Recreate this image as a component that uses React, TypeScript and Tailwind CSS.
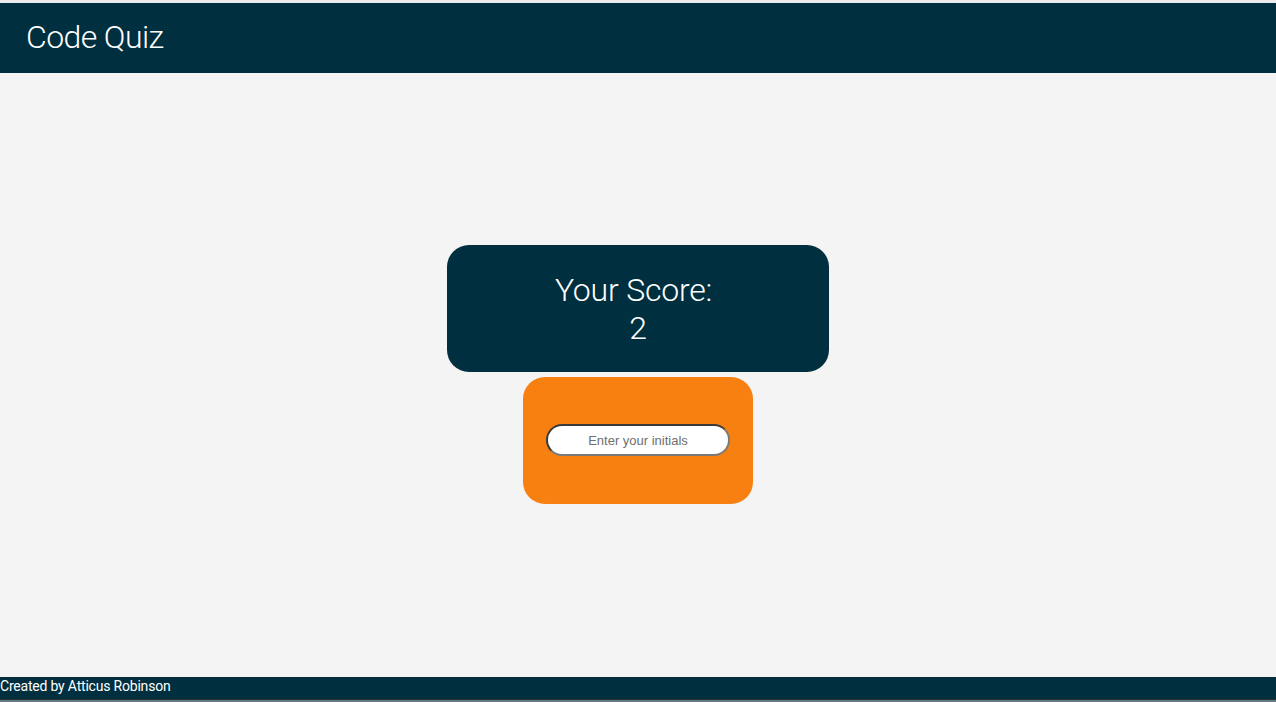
import React from "react";

export default function App() {
  return (
    <div className="flex h-[702px] w-full flex-col bg-[#f4f4f4]" style={{ fontFamily: "Roboto, 'Noto Sans', sans-serif" }}>
      <div className="h-[3px] bg-[#ececec]" />
      <header className="flex h-[70px] items-center bg-[#002f3f] pb-[2px] pl-[26px]">
        <h1 className="text-[32px] font-light leading-none tracking-[-0.6px] text-white">Code Quiz</h1>
      </header>
      <main className="flex flex-1 flex-col items-center justify-center gap-[5px] pb-[2px]">
        <div className="flex h-[127px] w-[382px] flex-col items-center justify-center rounded-[22px] bg-[#002f3f] pt-[2px] text-center text-[32px] font-light leading-[38px] tracking-[-0.2px] text-white">
          <div className="pr-[9px]">Your Score:</div>
          <div>2</div>
        </div>
        <div className="flex h-[127px] w-[230px] items-center justify-center rounded-[22px] bg-[#f78010]">
          <input
            placeholder="Enter your initials"
            className="h-[32px] w-[184px] rounded-full border-2 border-t-[#3a3a3a] border-l-[#3a3a3a] border-r-[#7a7a7a] border-b-[#7a7a7a] bg-white text-center text-[13px] text-black placeholder:text-[#6e6e6e]"
            style={{ fontFamily: "'Liberation Sans', Arial, sans-serif" }}
          />
        </div>
      </main>
      <footer className="flex h-[22px] items-center bg-[#002f3f] pb-[3px] text-[14px] tracking-[-0.2px] text-white">
        Created by Atticus Robinson
      </footer>
      <div className="h-[1px] bg-[#303030]" />
      <div className="h-[2px] bg-[#5a7d88]" />
    </div>
  );
}
